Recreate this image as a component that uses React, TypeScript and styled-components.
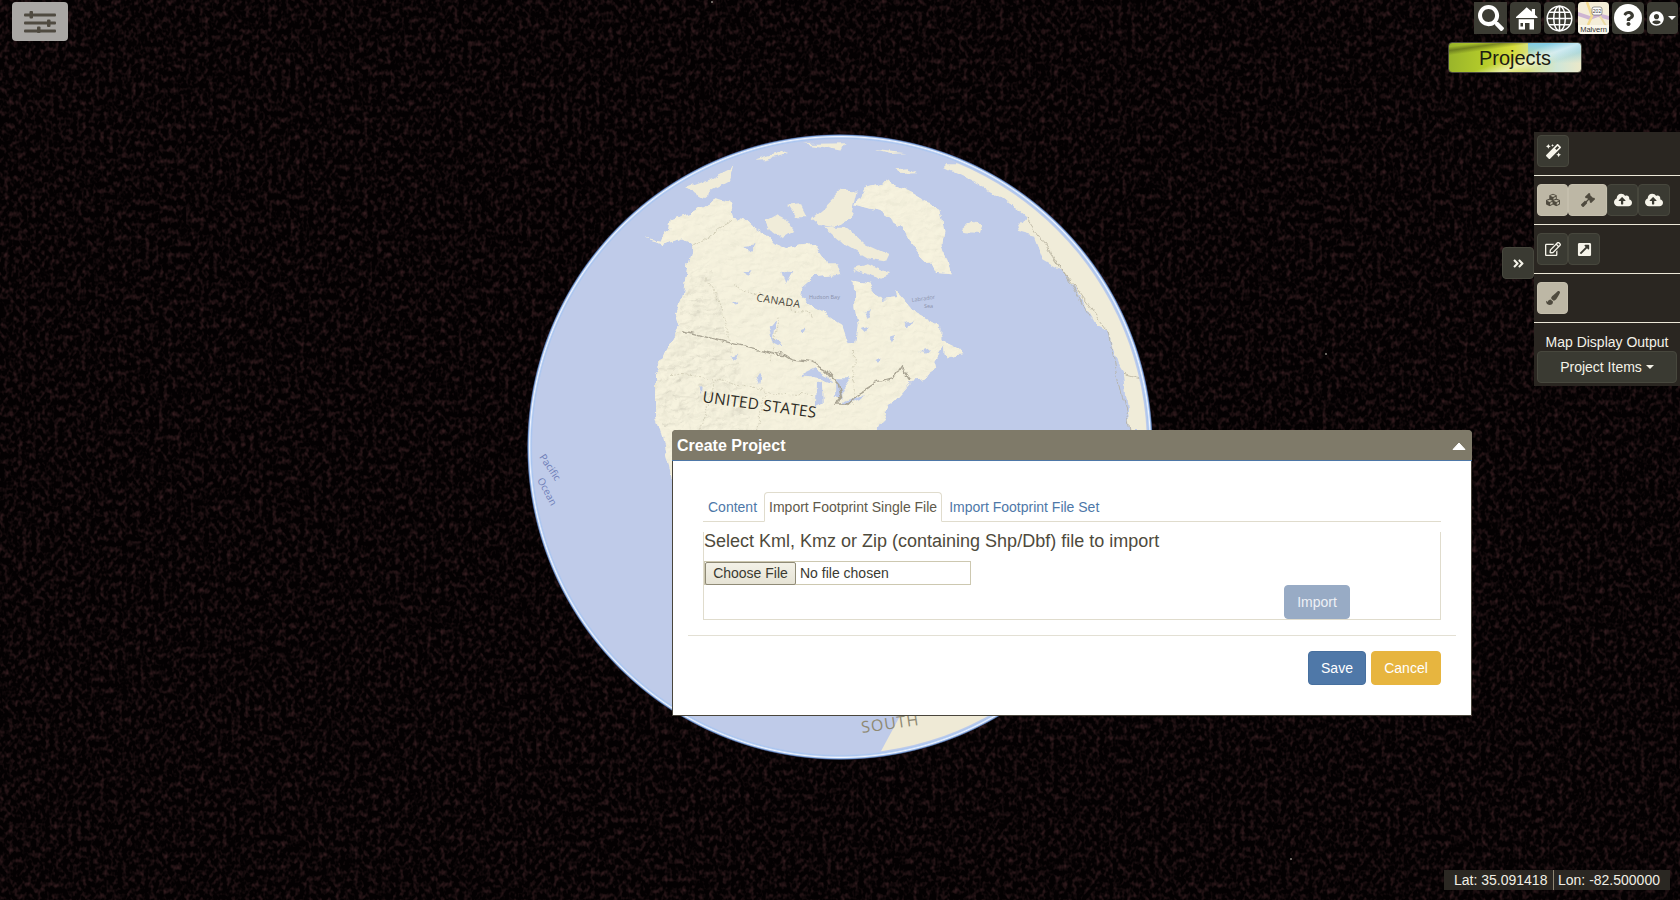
import styled, { createGlobalStyle } from "styled-components";
import {
  FaSearch, FaQuestion, FaUserCircle, FaMagic, FaCubes, FaGavel,
  FaCloudUploadAlt, FaRegEdit, FaExternalLinkSquareAlt, FaPaintBrush, FaAngleDoubleRight,
} from "react-icons/fa";

const GlobalStyle = createGlobalStyle`
  html, body { margin: 0; padding: 0; height: 100%; background: #040102; overflow: hidden; }
  * { box-sizing: border-box; }
  body { font-family: "Liberation Sans", Arial, sans-serif; font-size: 14px; color: #4e4a3c; }
`;

const Viewer = styled.div`
  position: relative;
  width: 1680px;
  height: 900px;
  overflow: hidden;
  background: #040102;
`;

const MapCanvas = styled.svg`
  position: absolute;
  left: 0;
  top: 0;
`;

const SettingsButton = styled.button`
  position: absolute;
  left: 12px;
  top: 2px;
  width: 56px;
  height: 39px;
  padding: 0;
  border: 0;
  border-radius: 4px;
  background: #a9a7a4;
  display: flex;
  align-items: center;
  justify-content: center;
`;

const TopBar = styled.div`
  position: absolute;
  top: 2px;
  left: 1474px;
  display: flex;
  gap: 3px;
`;

const TopButton = styled.button<{ $w: number; $square?: boolean }>`
  width: ${(p) => p.$w}px;
  height: 32px;
  padding: 0;
  border: 0;
  border-radius: ${(p) => (p.$square ? "0" : "4px")};
  background: #3b3b33;
  color: #fff;
  display: flex;
  align-items: center;
  justify-content: center;
  overflow: hidden;
`;

const HelpDisc = styled.span`
  width: 28px;
  height: 28px;
  border-radius: 50%;
  background: #fff;
  color: #3b3b33;
  display: flex;
  align-items: center;
  justify-content: center;
`;

const Caret = styled.span`
  display: inline-block;
  width: 0;
  height: 0;
  border-left: 4px solid transparent;
  border-right: 4px solid transparent;
  border-top: 4px solid currentColor;
`;

const ProjectsButton = styled.button`
  position: absolute;
  left: 1448px;
  top: 42px;
  width: 134px;
  height: 31px;
  padding: 1px 0 0;
  border: 1px solid #4a4a40;
  border-radius: 4px;
  font: 20px "Liberation Sans", Arial, sans-serif;
  color: #1c1c12;
  background:
    linear-gradient(172deg, rgba(70, 80, 20, 0) 8%, rgba(70, 80, 20, 0.55) 16%, rgba(70, 80, 20, 0) 26%),
    linear-gradient(160deg, rgba(255, 255, 255, 0) 48%, rgba(255, 255, 255, 0.55) 62%, rgba(255, 255, 255, 0) 74%),
    linear-gradient(180deg, #7fcbe6 0%, rgba(127, 203, 230, 0) 70%) right / 40% 100% no-repeat,
    linear-gradient(95deg, #98b32a 0%, #b5cc2a 28%, #d6dc3c 48%, #d8e2a0 66%, #cfe6d8 82%, #ece8c8 100%);
`;

const ToolPanel = styled.div`
  position: absolute;
  left: 1534px;
  top: 132px;
  width: 146px;
  height: 254px;
  background: #2a2621;
  display: flex;
  flex-direction: column;
`;

const ToolRow = styled.div<{ $first?: boolean }>`
  display: flex;
  padding: ${(p) => (p.$first ? "3px" : "8px")} 3px 8px;
  border-bottom: 1px solid #ece8d8;
`;

const ToolButton = styled.button<{ $on?: boolean; $w?: number }>`
  width: ${(p) => p.$w ?? 32}px;
  height: 32px;
  padding: 0;
  border: 1px solid ${(p) => (p.$on ? "#c4beac" : "#47473d")};
  border-radius: 4px;
  background: ${(p) => (p.$on ? "#bdb7a5" : "#3a3a32")};
  color: ${(p) => (p.$on ? "#4f4a3e" : "#f6f4ea")};
  display: flex;
  align-items: center;
  justify-content: center;
`;

const CollapseButton = styled(ToolButton)`
  position: absolute;
  left: 1502px;
  top: 247px;
`;

const OutputLabel = styled.div`
  margin-top: 10px;
  height: 18px;
  line-height: 18px;
  text-align: center;
  color: #f4f2e8;
  font-size: 14px;
`;

const ItemsButton = styled.button`
  align-self: flex-start;
  margin: 0 0 0 3px;
  width: 140px;
  height: 32px;
  border: 1px solid #47473d;
  border-radius: 4px;
  background: #3a3a32;
  color: #f4f2e8;
  font: 14px "Liberation Sans", Arial, sans-serif;
  display: flex;
  align-items: center;
  justify-content: center;
  gap: 4px;
`;

const Dialog = styled.section`
  position: absolute;
  left: 672px;
  top: 430px;
  width: 800px;
  height: 286px;
  background: #fff;
  border: 1px solid #4a463c;
  border-radius: 4px 4px 0 0;
`;

const DialogHeader = styled.header`
  height: 31px;
  margin: -1px -1px 0;
  padding: 2px 6px 0 5px;
  background: #7f7a69;
  border-bottom: 1px solid #4e78a8;
  border-radius: 4px 4px 0 0;
  display: flex;
  align-items: center;
  justify-content: space-between;
  color: #fff;
  font-size: 16px;
  font-weight: bold;
`;

const DialogBody = styled.div`
  padding: 31px 30px 0;
`;

const Tabs = styled.nav`
  display: flex;
  height: 30px;
  border-bottom: 1px solid #e0dccd;
`;

const Tab = styled.a<{ $active?: boolean }>`
  height: 30px;
  padding: 4px 4px 0;
  margin-right: 2px;
  font-size: 14px;
  line-height: 20px;
  color: ${(p) => (p.$active ? "#5f5a4b" : "#4e78a8")};
  border: 1px solid ${(p) => (p.$active ? "#e0dccd" : "transparent")};
  border-bottom-color: ${(p) => (p.$active ? "#fff" : "transparent")};
  border-radius: 4px 4px 0 0;
  white-space: nowrap;
`;

const ImportPanel = styled.div`
  height: 88px;
  margin-top: 10px;
  border: 1px solid #e0dccd;
  border-top: 0;
  display: flex;
  flex-direction: column;
`;

const ImportTitle = styled.div`
  font-size: 18px;
  line-height: 18px;
  margin-bottom: 11px;
  color: #4e4a3c;
`;

const FileField = styled.div`
  width: 267px;
  height: 24px;
  border: 1px solid #cdc8b0;
  display: flex;
  align-items: center;
  gap: 4px;
  color: #3a3a32;
  font-size: 14px;
`;

const FileButton = styled.button`
  width: 91px;
  height: 23px;
  padding: 0;
  border: 1px solid #8f8a76;
  border-radius: 2px;
  background: linear-gradient(#f3f1e7, #e6e3d5);
  color: #3a3a32;
  font: 14px "Liberation Sans", Arial, sans-serif;
`;

const ActionButton = styled.button<{ $bg: string; $w: number; $border?: string }>`
  width: ${(p) => p.$w}px;
  height: 34px;
  padding: 0;
  border: 1px solid ${(p) => p.$border ?? p.$bg};
  border-radius: 4px;
  background: ${(p) => p.$bg};
  color: #fff;
  font: 14px "Liberation Sans", Arial, sans-serif;
`;

const ImportButton = styled(ActionButton)`
  align-self: flex-end;
  margin-right: 90px;
  color: #edf0f5;
`;

const Rule = styled.hr`
  margin: 15px -15px;
  height: 1px;
  border: 0;
  background: #e3e0d4;
`;

const Footer = styled.footer`
  display: flex;
  justify-content: flex-end;
  gap: 5px;
`;

const CoordBar = styled.div`
  position: absolute;
  left: 1444px;
  top: 870px;
  width: 226px;
  height: 20px;
  background: #2a2722;
  color: #f0eee4;
  font-size: 14px;
  line-height: 20px;
  display: flex;
`;

const Coord = styled.span<{ $divided?: boolean }>`
  padding-left: ${(p) => (p.$divided ? "4px" : "10px")};
  width: ${(p) => (p.$divided ? "117px" : "109px")};
  border-left: ${(p) => (p.$divided ? "1px solid #8c8470" : "0")};
  white-space: nowrap;
`;

const NORTH_AMERICA =
  "M295 325 L345 335 L352 315 L368 300 L372 268 L415 250 L450 225 L480 205 L515 215 L525 258 L545 262 L565 285 L600 312 L620 340 L655 358 L690 345 L725 342 L752 390 L765 432 L722 438 L692 470 L688 498 L705 525 L755 555 L790 585 L805 640 L822 640 L828 585 L820 530 L818 452 L860 462 L888 510 L925 505 L920 480 L965 545 L1030 590 L1030 625 L1052 640 L1070 650 L1088 675 L1045 682 L1040 650 L1020 690 L1025 715 L985 750 L960 755 L935 790 L905 830 L880 890 L870 1040 L760 1100 L372 1041 L343 900 L331 849 L331 741 L360 660 L392 590 L382 550 L398 500 L410 410 L425 345 L395 325 L350 345 L330 335 Z";
const ARCTIC_ISLANDS = [
  "M600 270 L630 250 L650 262 L672 300 L640 325 L612 300 Z",
  "M655 230 L690 225 L705 262 L672 262 Z",
  "M715 265 L745 235 L790 180 L825 185 L812 250 L770 290 L735 285 Z",
  "M745 290 L795 290 L845 340 L908 375 L900 395 L850 385 L795 345 Z",
  "M815 410 L850 400 L905 430 L880 445 L820 420 Z",
  "M750 400 L775 400 L785 435 L760 440 Z",
];
const GREENLAND =
  "M820 225 L845 170 L900 155 L960 190 L1030 240 L1040 300 L1035 345 L1058 430 L1020 425 L985 385 L960 345 L940 295 L880 245 Z";
const ALASKA_NORTH = "M405 175 L470 145 L525 110 L515 150 L470 180 L445 205 Z";
const ARCTIC_SPECKS = [
  "M575 90 L640 65 L655 72 L600 88 Z",
  "M690 42 L800 40 L790 62 L740 50 Z",
  "M870 60 L950 70 L905 72 Z",
  "M920 115 L950 112 L970 130 L935 132 Z",
];
const EUROPE =
  "M1040 115 L1100 150 L1180 200 L1240 260 L1215 305 L1260 320 L1280 385 L1330 420 L1375 500 L1415 585 L1440 600 L1465 700 L1480 730 L1495 900 L1700 900 L1700 500 L1300 100 L1040 100 Z";
const ICELAND = "M1088 295 L1110 272 L1130 290 L1125 312 L1100 310 Z";
const LAKES = [
  "M690 735 L725 715 L755 735 L765 760 L735 745 Z",
  "M728 760 L740 755 L742 815 L725 825 Z",
  "M775 745 L810 745 L790 780 L790 810 L775 795 Z",
  "M795 815 L850 790 L845 800 L790 830 Z",
  "M545 345 L575 340 L565 365 Z",
  "M545 430 L570 420 L560 440 Z",
  "M612 590 L630 565 L625 620 L645 655 L622 640 Z",
  "M640 425 L665 430 L650 465 Z",
  "M835 600 L855 592 L845 612 Z",
  "M842 545 L860 540 L850 565 Z",
  "M942 575 L960 570 L950 595 Z",
  "M982 660 L1005 655 L990 675 Z",
  "M866 690 L885 682 L875 698 Z",
  "M902 620 L920 615 L910 635 Z",
  "M515 680 L535 674 L528 688 Z",
  "M575 735 L588 730 L584 762 Z",
  "M685 600 L700 596 L692 612 Z",
  "M800 540 L815 536 L806 552 Z",
  "M520 520 L535 516 L528 530 Z",
  "M438 770 L448 768 L446 790 Z",
];

function SliderIcon() {
  return (
    <svg width="33" height="22" viewBox="0 0 33 22" fill="#4f4a40">
      <rect x="0" y="2.500" width="32" height="3" rx="1" />
      <rect x="5.500" y="0" width="3.500" height="7.500" rx="1" />
      <rect x="0" y="10.500" width="32" height="3" rx="1" />
      <rect x="23" y="8.500" width="3.500" height="7.500" rx="1" />
      <rect x="0" y="18.500" width="32" height="3" rx="1" />
      <rect x="13" y="15.500" width="3.500" height="6.500" rx="1" />
    </svg>
  );
}

function HomeIcon() {
  return (
    <svg width="31" height="32" viewBox="0 0 31 32" fill="#fff">
      <path d="M16.700 5.300 L21.800 9.800 V7 H25 V12.700 L27.500 15 V16 H6 V15 Z" />
      <path fillRule="evenodd" d="M8.700 17.300 H24 V27.500 H8.700 Z M15 21 V27.500 H19.500 V21 Z M10.500 21 V24.500 H13 V21 Z" />
    </svg>
  );
}

function GlobeIcon() {
  return (
    <svg width="27" height="27" viewBox="0 0 27 27" fill="none" stroke="#fff" strokeWidth="1.500">
      <circle cx="13.500" cy="13.500" r="12.300" />
      <ellipse cx="13.500" cy="13.500" rx="5.800" ry="12.300" />
      <path d="M13.500 1.200v24.600M1.200 13.500h24.600M3 7.300h21M3 19.700h21" />
    </svg>
  );
}

function MapThumb() {
  return (
    <svg width="31" height="32" viewBox="0 0 31 32">
      <rect width="31" height="32" fill="#f4edd8" />
      <path d="M0 10 L12 14 L20 11 L31 14 L31 18 L20 15 L12 18 L0 14 Z" fill="#cdb4d2" />
      <path d="M9 0 L14 14 L10 23" stroke="#f3d98e" strokeWidth="2.500" fill="none" />
      <path d="M22 14 L28 24" stroke="#ecdca6" strokeWidth="2" fill="none" />
      <rect x="14" y="5" width="10" height="8" rx="2" fill="#fff" stroke="#555" strokeWidth=".6" />
      <text x="19" y="11" fontSize="5" textAnchor="middle" fill="#333" fontFamily="Liberation Sans">202</text>
      <rect y="23" width="31" height="9" fill="#fbf8ee" opacity=".85" />
      <text x="15.500" y="30" fontSize="7.500" textAnchor="middle" fill="#333" fontFamily="Liberation Sans">Malvern</text>
    </svg>
  );
}

function StarNoise() {
  return (
    <>
      <defs>
        <filter id="noise" x="0" y="0" width="100%" height="100%" colorInterpolationFilters="sRGB">
          <feTurbulence type="fractalNoise" baseFrequency="0.22 0.17" numOctaves="2" seed="11" />
          <feColorMatrix values="0 0 0 0 0.2  0 0 0 0 0.11  0 0 0 0 0.12  2.400 0 0 0 -1.100" />
        </filter>
      </defs>
      <rect width="1680" height="900" filter="url(#noise)" />
    </>
  );
}

function Globe() {
  return (
    <g>
      <defs>
        <clipPath id="earth"><circle cx="840" cy="447" r="307" /></clipPath>
        <radialGradient id="halo" gradientUnits="userSpaceOnUse" cx="840" cy="447" r="313">
          <stop offset="0.982" stopColor="#bfcbe9" />
          <stop offset="0.987" stopColor="#a9c5f0" />
          <stop offset="0.992" stopColor="#f0f5ff" />
          <stop offset="0.996" stopColor="#7fa4dc" />
          <stop offset="1" stopColor="#101024" />
        </radialGradient>
        <filter id="coast" x="-5%" y="-5%" width="110%" height="110%">
          <feTurbulence type="fractalNoise" baseFrequency="0.07" numOctaves="3" seed="3" result="n" />
          <feDisplacementMap in="SourceGraphic" in2="n" scale="9" xChannelSelector="R" yChannelSelector="G" />
          <feGaussianBlur stdDeviation="0.450" />
        </filter>
        <filter id="reliefSoft" x="0" y="0" width="100%" height="100%">
          <feTurbulence type="fractalNoise" baseFrequency="0.03 0.05" numOctaves="4" seed="7" />
          <feDiffuseLighting surfaceScale="2" lightingColor="#f8f4e0">
            <feDistantLight azimuth="225" elevation="75" />
          </feDiffuseLighting>
          <feComposite in2="SourceAlpha" operator="in" />
        </filter>
        <filter id="reliefHard" x="0" y="0" width="100%" height="100%">
          <feTurbulence type="fractalNoise" baseFrequency="0.025 0.035" numOctaves="4" seed="21" />
          <feDiffuseLighting surfaceScale="5" lightingColor="#f8f4e0">
            <feDistantLight azimuth="225" elevation="72" />
          </feDiffuseLighting>
          <feComposite in2="SourceAlpha" operator="in" />
        </filter>
      </defs>
      <circle cx="840" cy="447" r="313" fill="url(#halo)" />
      <g clipPath="url(#earth)">
        <g filter="url(#coast)">
          <g transform="translate(520 130) scale(0.408 0.3333)" fill="#f0ecd9">
            <path d={NORTH_AMERICA} />
            {ARCTIC_ISLANDS.map((d) => <path key={d} d={d} />)}
            <path d={GREENLAND} />
            <path d={ALASKA_NORTH} />
            {ARCTIC_SPECKS.map((d) => <path key={d} d={d} />)}
            <path d={EUROPE} />
            <path d={ICELAND} />
            <g filter="url(#reliefSoft)">
              <path d={NORTH_AMERICA} />
              <path d={GREENLAND} />
            </g>
            <g filter="url(#reliefHard)">
              <path d="M331 849 L331 741 L360 660 L392 590 L398 500 L425 400 L470 420 L500 600 L540 720 L560 900 L440 1000 Z" />
            </g>
            {LAKES.map((d) => <path key={d} d={d} fill="#bfcbe9" />)}
            <path
              d="M400 602 L520 640 L650 678 L665 690 L715 698 L750 720 L780 760 L788 800 L778 828 L800 828 L825 795 L870 760 L915 745 L935 708 L960 750"
              fill="none"
              stroke="#a9a493"
              strokeWidth="4"
            />
            <g fill="none" stroke="#c9c4ae" strokeWidth="2" strokeDasharray="5 4">
              <path d="M522 265 L425 350" strokeDasharray="none" />
              <path d="M640 560 L610 700 M520 460 L555 480 L720 560 M820 660 L815 830 M460 440 L520 640 M370 730 L480 745 L620 790 L720 800 M600 790 L580 900 M480 745 L440 900" />
            </g>
            <path d="M1240 260 L1330 420 L1440 600 L1495 900 M1300 360 L1400 560 M1480 730 L1540 750" fill="none" stroke="#b3ae9a" strokeWidth="2" />
          </g>
        </g>
        <g fontFamily="Open Sans, Liberation Sans, sans-serif">
          <text x="756" y="301" fontSize="10.500" fill="#4b483e" letterSpacing=".4" transform="rotate(9 756 301)">CANADA</text>
          <text x="702" y="402" fontSize="15.500" fill="#2f2d26" letterSpacing=".2" transform="rotate(8 702 402)">UNITED STATES</text>
          <text x="809" y="299" fontSize="5.500" fill="#8c93ac">Hudson Bay</text>
          <text x="912" y="302" fontSize="5.500" fill="#8c93ac" transform="rotate(-8 912 302)">Labrador</text>
          <text x="924" y="308" fontSize="5.500" fill="#8c93ac">Sea</text>
          <text x="539" y="457" fontSize="10" fill="#6f7fb8" transform="rotate(56 539 457)">Pacific</text>
          <text x="537" y="480" fontSize="10" fill="#6f7fb8" transform="rotate(62 537 480)">Ocean</text>
          <path d="M900 716 L880 753 L915 752 L955 737 L1000 716 Z" fill="#efead6" />
          <text x="862" y="733" fontSize="16" fill="#8f8a74" letterSpacing="1" transform="rotate(-8 862 733)">SOUTH</text>
        </g>
      </g>
    </g>
  );
}

export default function App() {
  const stars = [[712, 2], [1326, 354], [1291, 859]];

  return (
    <Viewer>
      <GlobalStyle />
      <MapCanvas width="1680" height="900" viewBox="0 0 1680 900">
        <StarNoise />
        {stars.map(([x, y]) => <circle key={x} cx={x} cy={y} r="1.100" fill="#b5b0a6" opacity=".7" />)}
        <Globe />
      </MapCanvas>

      <SettingsButton aria-label="Settings"><SliderIcon /></SettingsButton>

      <TopBar>
        <TopButton $w={33} $square><FaSearch size={26} /></TopButton>
        <TopButton $w={31}><HomeIcon /></TopButton>
        <TopButton $w={31}><GlobeIcon /></TopButton>
        <TopButton $w={31}><MapThumb /></TopButton>
        <TopButton $w={32}><HelpDisc><FaQuestion size={15} /></HelpDisc></TopButton>
        <TopButton $w={31}><FaUserCircle size={15} style={{ marginRight: 4 }} /><Caret /></TopButton>
      </TopBar>
      <ProjectsButton>Projects</ProjectsButton>

      <CollapseButton><FaAngleDoubleRight size={13} /></CollapseButton>
      <ToolPanel>
        <ToolRow $first><ToolButton><FaMagic size={15} /></ToolButton></ToolRow>
        <ToolRow>
          <ToolButton $on $w={31}><FaCubes size={14} /></ToolButton>
          <ToolButton $on $w={39}><FaGavel size={14} /></ToolButton>
          <ToolButton $w={31}><FaCloudUploadAlt size={18} /></ToolButton>
          <ToolButton $w={32}><FaCloudUploadAlt size={18} /></ToolButton>
        </ToolRow>
        <ToolRow>
          <ToolButton $w={31}><FaRegEdit size={16} /></ToolButton>
          <ToolButton><FaExternalLinkSquareAlt size={15} /></ToolButton>
        </ToolRow>
        <ToolRow><ToolButton $on $w={31}><FaPaintBrush size={14} /></ToolButton></ToolRow>
        <OutputLabel>Map Display Output</OutputLabel>
        <ItemsButton>Project Items <Caret /></ItemsButton>
      </ToolPanel>

      <Dialog>
        <DialogHeader>
          Create Project
          <svg width="14" height="9" viewBox="0 0 14 9"><path d="M7 1 L13 7.500 H1 Z" fill="#fff" stroke="#fff" strokeLinejoin="round" /></svg>
        </DialogHeader>
        <DialogBody>
          <Tabs>
            <Tab>Content</Tab>
            <Tab $active>Import Footprint Single File</Tab>
            <Tab>Import Footprint File Set</Tab>
          </Tabs>
          <ImportPanel>
            <ImportTitle>Select Kml, Kmz or Zip (containing Shp/Dbf) file to import</ImportTitle>
            <FileField><FileButton>Choose File</FileButton>No file chosen</FileField>
            <ImportButton $bg="#98abc5" $w={66}>Import</ImportButton>
          </ImportPanel>
          <Rule />
          <Footer>
            <ActionButton $bg="#4f78a8" $border="#47709f" $w={58}>Save</ActionButton>
            <ActionButton $bg="#e7b53f" $w={70}>Cancel</ActionButton>
          </Footer>
        </DialogBody>
      </Dialog>

      <CoordBar>
        <Coord>Lat: 35.091418</Coord>
        <Coord $divided>Lon: -82.500000</Coord>
      </CoordBar>
    </Viewer>
  );
}
